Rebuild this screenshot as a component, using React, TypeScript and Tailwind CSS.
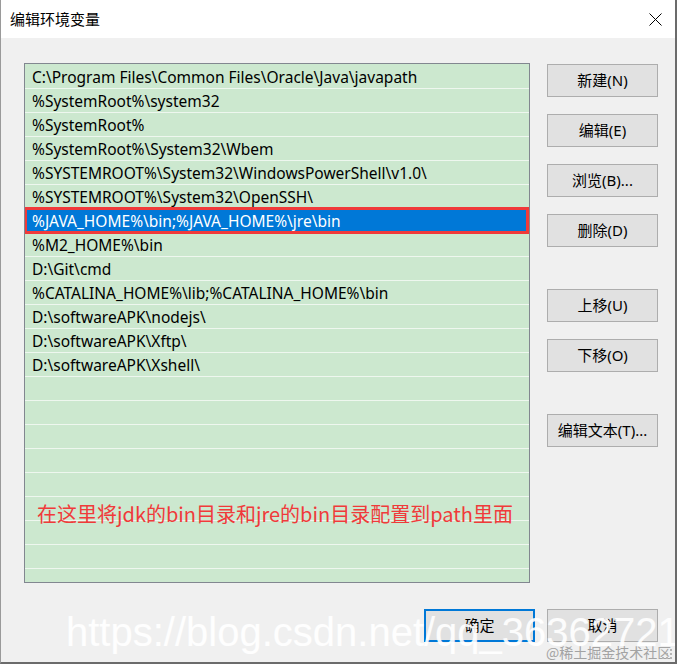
import React from "react";

const paths = [
  "C:\\Program Files\\Common Files\\Oracle\\Java\\javapath",
  "%SystemRoot%\\system32",
  "%SystemRoot%",
  "%SystemRoot%\\System32\\Wbem",
  "%SYSTEMROOT%\\System32\\WindowsPowerShell\\v1.0\\",
  "%SYSTEMROOT%\\System32\\OpenSSH\\",
  "%JAVA_HOME%\\bin;%JAVA_HOME%\\jre\\bin",
  "%M2_HOME%\\bin",
  "D:\\Git\\cmd",
  "%CATALINA_HOME%\\lib;%CATALINA_HOME%\\bin",
  "D:\\softwareAPK\\nodejs\\",
  "D:\\softwareAPK\\Xftp\\",
  "D:\\softwareAPK\\Xshell\\",
];

const SELECTED = 6;

function WinButton({ label, className = "" }: { label: string; className?: string }) {
  return (
    <div
      className={
        "w-[111px] h-[33px] flex items-center justify-center bg-[#e1e1e1] border border-[#adadad] text-[15px] text-black " +
        className
      }
    >
      {label}
    </div>
  );
}

export default function App() {
  const rows = Array.from({ length: 22 }, (_, i) => paths[i] ?? "");

  return (
    <div className="relative w-[677px] h-[664px] overflow-hidden bg-[#f0f0f0] flex flex-col border-l border-l-[#9a9a9a] border-r-2 border-r-[#6b6b6b] border-b-2 border-b-[#6b6b6b] font-['Noto_Sans','Noto_Sans_CJK_SC',sans-serif]">
      {/* title bar */}
      <div className="h-[38px] bg-white flex items-center justify-between pl-[9px] pr-[13px]">
        <span className="text-[15px] text-black font-['Noto_Sans_CJK_SC',sans-serif]">编辑环境变量</span>
        <svg width="13" height="13" viewBox="0 0 13 13" className="mt-[1px]">
          <path d="M0.5 0.5 L12.5 12.5 M12.5 0.5 L0.5 12.5" stroke="#000" strokeWidth="1" fill="none" />
        </svg>
      </div>

      <div className="flex-1 flex flex-col pl-[23px] pt-[25px]">
        <div className="flex">
          {/* list */}
          <div className="relative w-[506px] h-[520px] border border-[#828790] bg-[#cce8cf] pt-[1px] overflow-hidden">
            {rows.map((p, i) =>
              i === SELECTED ? (
                <div key={i} className="relative h-[24px]">
                  <div className="h-[24px] mx-[2px] bg-[#0078d7] text-white text-[15.5px] leading-[24px] pl-[5px] whitespace-nowrap">
                    {p}
                  </div>
                  <div className="absolute -top-[2px] -bottom-[1px] left-[-1px] right-[0px] border-[3px] border-[#f03a3a]" />
                </div>
              ) : (
                <div
                  key={i}
                  className="h-[24px] border-b border-[#eef7ef] pt-[1px] text-[15.5px] leading-[22px] pl-[7px] text-black whitespace-nowrap"
                >
                  {p}
                </div>
              )
            )}
            <div className="absolute left-[12px] top-[440px] text-[20px] leading-[20px] text-[#f03a3a] whitespace-nowrap font-['Noto_Sans_CJK_SC',sans-serif]">
              在这里将jdk的bin目录和jre的bin目录配置到path里面
            </div>
          </div>

          {/* side buttons */}
          <div className="ml-[17px] pt-[1px] flex flex-col">
            <WinButton label="新建(N)" />
            <WinButton label="编辑(E)" className="mt-[17px]" />
            <WinButton label="浏览(B)..." className="mt-[17px]" />
            <WinButton label="删除(D)" className="mt-[17px]" />
            <WinButton label="上移(U)" className="mt-[42px]" />
            <WinButton label="下移(O)" className="mt-[17px]" />
            <WinButton label="编辑文本(T)..." className="mt-[42px]" />
          </div>
        </div>

        {/* bottom buttons */}
        <div className="flex justify-end gap-[12px] mt-[26px] pr-[17px]">
          <div className="w-[111px] h-[33px] flex items-center justify-center bg-[#e1e1e1] border-2 border-[#0078d7] text-[15px] text-black">
            确定
          </div>
          <WinButton label="取消" />
        </div>
      </div>

      {/* watermarks */}
      <div className="absolute left-[65px] top-[612px] text-[40px] leading-[40px] text-white/90 whitespace-nowrap font-['Liberation_Sans',sans-serif]">
        https://blog.csdn.net/qq_36362721
      </div>
      <div className="absolute left-[545px] top-[644px] text-[14px] leading-[16px] text-[#a3a3a3] whitespace-nowrap font-['Noto_Sans_CJK_SC',sans-serif]">
        @稀土掘金技术社区
      </div>
      <svg className="absolute right-[1px] bottom-[1px]" width="12" height="12" viewBox="0 0 12 12">
        <rect x="8" y="0" width="2" height="2" fill="#b5b5b5" />
        <rect x="4" y="4" width="2" height="2" fill="#b5b5b5" />
        <rect x="8" y="4" width="2" height="2" fill="#b5b5b5" />
        <rect x="0" y="8" width="2" height="2" fill="#b5b5b5" />
        <rect x="4" y="8" width="2" height="2" fill="#b5b5b5" />
        <rect x="8" y="8" width="2" height="2" fill="#b5b5b5" />
      </svg>
    </div>
  );
}
